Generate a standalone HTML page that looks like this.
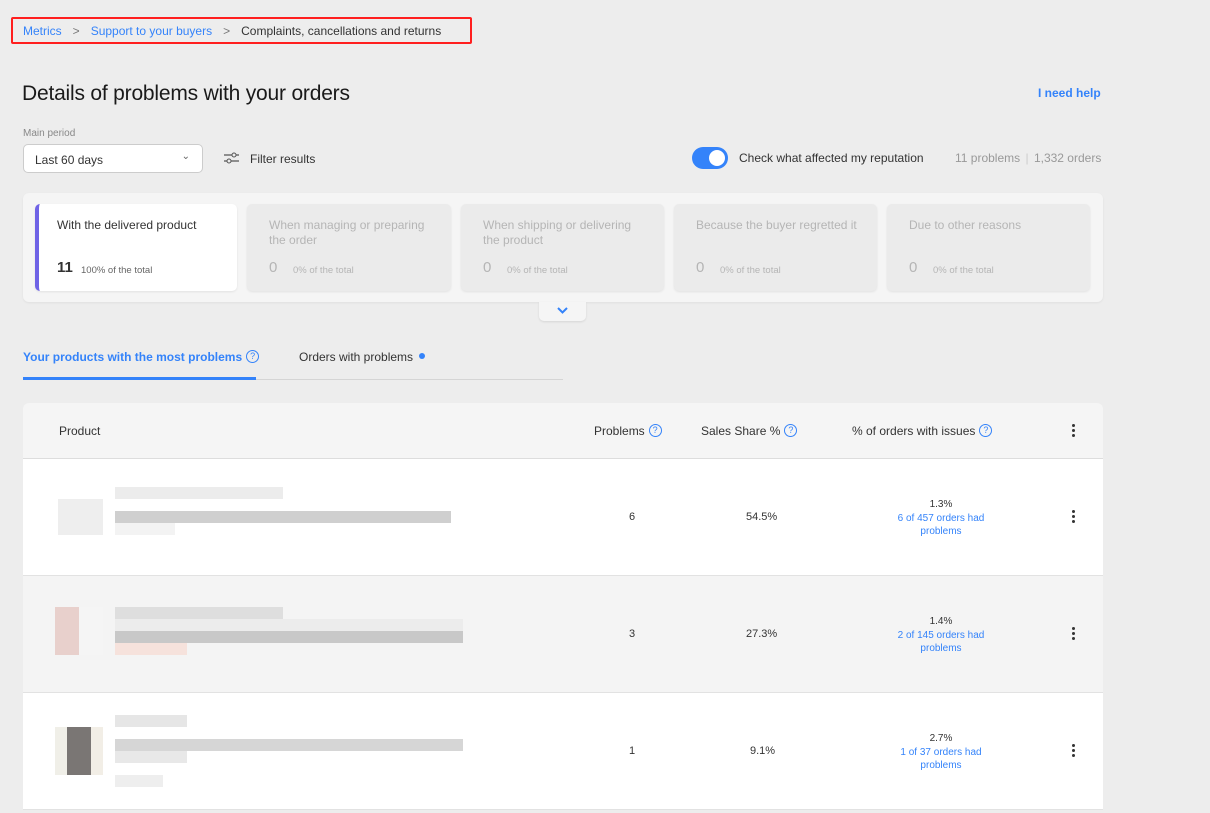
<!DOCTYPE html><html><head><style>
*{box-sizing:border-box;margin:0;padding:0}
body{width:1210px;height:813px;background:#ededed;font-family:"Liberation Sans",sans-serif;color:#333;position:relative;overflow:hidden;font-size:13px}
.a{position:absolute;white-space:nowrap}
.blue{color:#3483fa}
.card{position:absolute;top:204px;height:87px;border-radius:5px;background:#ebebeb;box-shadow:0 1px 2px rgba(0,0,0,.08);padding:14px 20px 0 22px;font-size:12px;color:#b5b5b5;line-height:15px;white-space:normal}
.card .n{position:absolute;left:22px;top:56px;font-size:15px}
.card .p{position:absolute;left:46px;top:59px;font-size:9.5px}
.q{display:inline-block;width:13px;height:13px;border:1.2px solid #3483fa;border-radius:50%;font-size:9px;line-height:11px;text-align:center;color:#3483fa;vertical-align:middle;margin-left:4px;position:relative;top:-1px;font-weight:normal}
.row{position:absolute;left:23px;width:1080px;height:117px;border-bottom:1px solid #e2e2e2}
.dots{position:absolute;width:3px}
.dots i{display:block;width:3px;height:3px;background:#333;border-radius:50%;margin-bottom:2px}
.px{position:absolute;height:12px}
</style></head><body>
<div class="a" style="left:11px;top:17px;width:461px;height:27px;border:2px solid #ff1f1f;border-radius:2px"></div>
<div class="a" style="left:23px;top:24px;font-size:12px"><span class="blue">Metrics</span><span style="color:#777;margin:0 11px">&gt;</span><span class="blue">Support to your buyers</span><span style="color:#777;margin:0 11px">&gt;</span><span>Complaints, cancellations and returns</span></div>
<div class="a" style="left:22px;top:82px;font-size:21px;color:#1a1a1a;letter-spacing:-0.2px">Details of problems with your orders</div>
<div class="a blue" style="left:1038px;top:86px;font-size:12px;font-weight:bold">I need help</div>
<div class="a" style="left:23px;top:128px;font-size:10px;color:#888">Main period</div>
<div class="a" style="left:23px;top:144px;width:180px;height:29px;background:#fff;border:1px solid #ccc;border-radius:5px;padding:8px 11px;font-size:12px">Last 60 days<span style="position:absolute;right:12px;top:6px;font-size:10px;color:#666">⌄</span></div>
<svg class="a" style="left:224px;top:152px" width="15" height="12"><path d="M0 3h15M0 9h15" stroke="#555" stroke-width="1.2"/><circle cx="10" cy="3" r="2" fill="#ededed" stroke="#555"/><circle cx="5" cy="9" r="2" fill="#ededed" stroke="#555"/></svg>
<div class="a" style="left:250px;top:152px;font-size:12px">Filter results</div>
<div class="a" style="left:692px;top:147px;width:36px;height:22px;border-radius:11px;background:#3483fa"><div style="position:absolute;right:3px;top:3px;width:16px;height:16px;border-radius:50%;background:#fff"></div></div>
<div class="a" style="left:739px;top:151px;font-size:12px">Check what affected my reputation</div>
<div class="a" style="left:955px;top:151px;font-size:12px;color:#999">11 problems <span style="color:#ccc;margin:0 2px">|</span> 1,332 orders</div>
<div class="a" style="left:23px;top:193px;width:1080px;height:109px;background:#f5f5f5;border-radius:6px;box-shadow:0 1px 2px rgba(0,0,0,.06)"></div>
<div class="card" style="left:35px;width:202px;background:#fff;color:#333;border-left:4px solid #6f63e6;padding-left:18px">With the delivered product<span class="n" style="left:18px;color:#333;font-weight:bold">11</span><span class="p" style="left:42px;color:#666">100% of the total</span></div>
<div class="card" style="left:247px;width:204px">When managing or preparing the order<span class="n">0</span><span class="p">0% of the total</span></div>
<div class="card" style="left:461px;width:203px">When shipping or delivering the product<span class="n">0</span><span class="p">0% of the total</span></div>
<div class="card" style="left:674px;width:203px">Because the buyer regretted it<span class="n">0</span><span class="p">0% of the total</span></div>
<div class="card" style="left:887px;width:203px">Due to other reasons<span class="n">0</span><span class="p">0% of the total</span></div>
<div class="a" style="left:539px;top:302px;width:47px;height:19px;background:#f5f5f5;border-radius:0 0 5px 5px;box-shadow:0 1px 2px rgba(0,0,0,.1)"><svg style="position:absolute;left:18px;top:5px" width="11" height="8"><path d="M1 1l4.5 4.5L10 1" stroke="#3483fa" stroke-width="2" fill="none"/></svg></div>
<div class="a blue" style="left:23px;top:350px;font-size:12px;font-weight:bold">Your products with the most problems<span class="q">?</span></div>
<div class="a" style="left:299px;top:350px;font-size:12px">Orders with problems <span style="display:inline-block;width:6px;height:6px;border-radius:50%;background:#3483fa;vertical-align:2px;margin-left:3px"></span></div>
<div class="a" style="left:23px;top:379px;width:540px;height:1px;background:#d5d5d5"></div>
<div class="a" style="left:23px;top:377px;width:233px;height:3px;background:#3483fa"></div>
<div class="a" style="left:23px;top:403px;width:1080px;height:56px;background:#f5f5f5;border-radius:6px 6px 0 0;border-bottom:1px solid #ddd"></div>
<div class="a" style="left:59px;top:424px;font-size:12px">Product</div>
<div class="a" style="left:594px;top:424px;font-size:12px">Problems<span class="q">?</span></div>
<div class="a" style="left:701px;top:424px;font-size:12px">Sales Share %<span class="q">?</span></div>
<div class="a" style="left:852px;top:424px;font-size:12px">% of orders with issues<span class="q">?</span></div>
<div class="dots" style="left:1072px;top:424px"><i></i><i></i><i></i></div>

<div class="row" style="top:459px;background:#fff"></div>
<div class="row" style="top:576px;background:#f4f4f4"></div>
<div class="row" style="top:693px;background:#fff"></div>

<div class="px" style="left:115px;top:487px;width:168px;background:#ececec"></div>
<div class="px" style="left:115px;top:511px;width:336px;background:#cfcfcf"></div>
<div class="px" style="left:115px;top:523px;width:60px;background:#f3f3f3"></div>
<div class="px" style="left:58px;top:499px;width:45px;height:36px;background:#eee"></div>
<div class="a" style="left:629px;top:511px;font-size:11px">6</div>
<div class="a" style="left:746px;top:511px;font-size:11px">54.5%</div>
<div class="a" style="left:880px;top:498px;width:122px;text-align:center;font-size:10px;line-height:13.5px;white-space:normal">1.3%<br><span class="blue">6 of 457 orders had problems</span></div>
<div class="dots" style="left:1072px;top:510px"><i></i><i></i><i></i></div>

<div class="px" style="left:115px;top:607px;width:168px;background:#dedede"></div>
<div class="px" style="left:115px;top:619px;width:348px;background:#ececec"></div>
<div class="px" style="left:115px;top:631px;width:348px;background:#c8c8c8"></div>
<div class="px" style="left:115px;top:643px;width:72px;background:#f6e2dc"></div>
<div class="px" style="left:55px;top:607px;width:48px;height:48px;background:linear-gradient(90deg,#e8d0cc 50%,#f5f5f5 50%)"></div>
<div class="a" style="left:629px;top:628px;font-size:11px">3</div>
<div class="a" style="left:746px;top:628px;font-size:11px">27.3%</div>
<div class="a" style="left:880px;top:615px;width:122px;text-align:center;font-size:10px;line-height:13.5px;white-space:normal">1.4%<br><span class="blue">2 of 145 orders had problems</span></div>
<div class="dots" style="left:1072px;top:627px"><i></i><i></i><i></i></div>

<div class="px" style="left:115px;top:715px;width:72px;background:#e6e6e6"></div>
<div class="px" style="left:115px;top:739px;width:348px;background:#d6d6d6"></div>
<div class="px" style="left:115px;top:751px;width:72px;background:#e8e8e8"></div>
<div class="px" style="left:115px;top:775px;width:48px;background:#eee"></div>
<div class="px" style="left:55px;top:727px;width:48px;height:48px;background:linear-gradient(90deg,#f0efe8 25%,#7a7674 25%,#7a7674 75%,#f2eee6 75%)"></div>
<div class="a" style="left:629px;top:745px;font-size:11px">1</div>
<div class="a" style="left:750px;top:745px;font-size:11px">9.1%</div>
<div class="a" style="left:880px;top:732px;width:122px;text-align:center;font-size:10px;line-height:13.5px;white-space:normal">2.7%<br><span class="blue">1 of 37 orders had problems</span></div>
<div class="dots" style="left:1072px;top:744px"><i></i><i></i><i></i></div>
</body></html>
